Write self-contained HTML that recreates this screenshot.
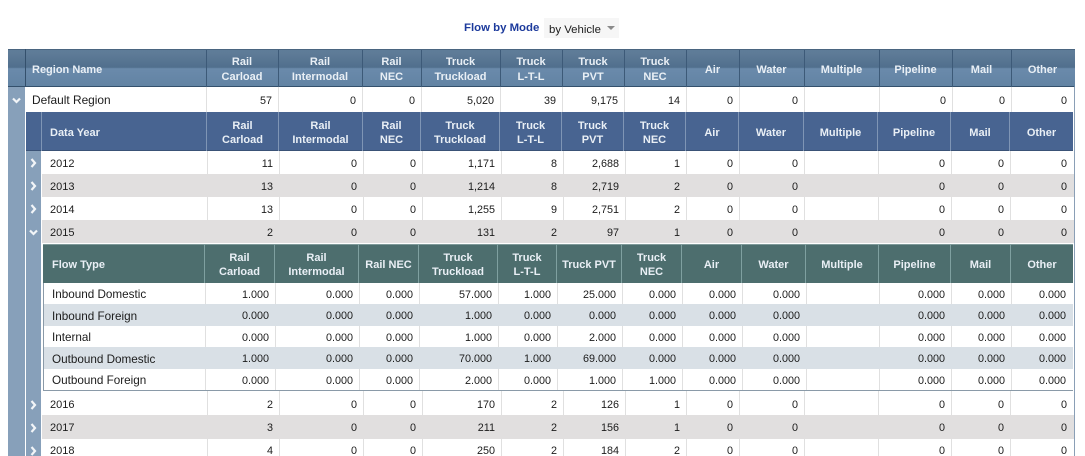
<!DOCTYPE html>
<html>
<head>
<meta charset="utf-8">
<style>
html,body{margin:0;padding:0;background:#fff;width:1085px;height:456px;overflow:hidden}
body{position:relative;font-family:"Liberation Sans",Arial,sans-serif;color:#1c1c1c}
.a{position:absolute}
table{position:absolute;border-collapse:separate;border-spacing:0;table-layout:fixed}
td,th{padding:0;overflow:hidden;white-space:nowrap;box-sizing:border-box}
td{text-align:right;padding-right:6px;padding-top:2px;font-size:10.8px;border-right:1px solid #e0e0e0}
td:last-child{border-right:0;padding-right:7px}
td.n{text-align:left;font-size:11.9px;padding-right:0}
td.y{font-size:11px}
th{font-size:11px;font-weight:bold;color:#e9eff5;text-align:center;white-space:normal}
th.n{text-align:left}
.h1 th{line-height:15px;border-right:1px solid #3d5a78;height:37px;padding-top:3px;padding-right:1px}
.h1 th:last-child{border-right:0}
.h1 th.n{padding-left:6px}
.h2 th{line-height:14px;border-right:1px solid #7f95b5;height:39px;padding-top:2px}
.h2 th:last-child{border-right:0}
.h2 th.n{padding-left:8px}
.h3 th{line-height:14px;border-right:1px solid #7fa0a0;height:39px;padding-top:2px}
.h3 th:last-child{border-right:0}
.h3 th.n{padding-left:9px}
.r1 td.n{padding-left:7px;padding-top:0}
.r2 td.n{padding-left:8px}
.r3 td.n{padding-left:9px;font-size:11.7px}
.g td{background:#e1dfdf;border-right-color:#e1dfdf}
.b td{background:#d9e0e6;border-right-color:#d9e0e6}
.t3 td{padding-top:3px}
.t1 td{padding-top:1px}
.t0 td{padding-top:0}
svg{position:absolute;display:block}
</style>
</head>
<body>
<div class="a" style="left:464px;top:20px;font-size:11.4px;font-weight:bold;color:#1c3a9c;line-height:16px">Flow by Mode</div>
<div class="a" style="left:544px;top:18px;width:75px;height:20px;background:#f6f6f6"></div>
<div class="a" style="left:549px;top:23px;font-size:11.4px;line-height:15px;color:#1c1c1c">by Vehicle</div>
<div class="a" style="left:607px;top:26px;width:0;height:0;border-left:4px solid transparent;border-right:4px solid transparent;border-top:4px solid #8a8a8a"></div>

<!-- outer strip -->
<div class="a" style="left:8px;top:87px;width:17px;height:369px;background:#87a0ba"></div>
<div class="a" style="left:26px;top:151px;width:15px;height:305px;background:#87a0ba"></div>
<div class="a" style="left:1074px;top:87px;width:1px;height:369px;background:#8a9fb6"></div>

<!-- L1 header -->
<div class="a" style="left:8px;top:49px;width:1067px;height:38px;background:linear-gradient(#5f7d99 0,#5e7b97 12%,#577592 30%,#506f8d 48%,#6a8aab 52%,#6283a3 100%)"></div>
<div class="a" style="left:8px;top:49px;width:1067px;height:1px;background:#4a6580"></div>
<div class="a" style="left:8px;top:86px;width:1066px;height:1px;background:#34506c"></div>
<div class="a" style="left:25px;top:49px;width:1px;height:38px;background:#34506c"></div>
<table class="h1" style="left:26px;top:50px;width:1048px">
<colgroup><col style="width:181px"><col style="width:72px"><col style="width:84px"><col style="width:59px"><col style="width:79px"><col style="width:62px"><col style="width:62px"><col style="width:62px"><col style="width:53px"><col style="width:65px"><col style="width:75px"><col style="width:73px"><col style="width:59px"><col style="width:62px"></colgroup>
<tr><th class="n">Region Name</th><th>Rail<br>Carload</th><th>Rail<br>Intermodal</th><th>Rail<br>NEC</th><th>Truck<br>Truckload</th><th>Truck<br>L-T-L</th><th>Truck<br>PVT</th><th>Truck<br>NEC</th><th>Air</th><th>Water</th><th>Multiple</th><th>Pipeline</th><th>Mail</th><th>Other</th></tr>
</table>

<!-- L1 row -->
<table class="r1" style="left:25px;top:87px;width:1049px">
<colgroup><col style="width:182px"><col style="width:72px"><col style="width:84px"><col style="width:59px"><col style="width:79px"><col style="width:62px"><col style="width:62px"><col style="width:62px"><col style="width:53px"><col style="width:65px"><col style="width:75px"><col style="width:73px"><col style="width:59px"><col style="width:62px"></colgroup>
<tr style="height:25px"><td class="n">Default Region</td><td>57</td><td>0</td><td>0</td><td>5,020</td><td>39</td><td>9,175</td><td>14</td><td>0</td><td>0</td><td></td><td>0</td><td>0</td><td>0</td></tr>
</table>

<!-- L2 header -->
<div class="a" style="left:26px;top:112px;width:1047px;height:39px;background:#486491"></div>
<div class="a" style="left:26px;top:150px;width:1047px;height:1px;background:#3a5276"></div>
<div class="a" style="left:41px;top:112px;width:1px;height:39px;background:#7f95b5"></div>
<table class="h2" style="left:42px;top:112px;width:1031px">
<colgroup><col style="width:165px"><col style="width:72px"><col style="width:84px"><col style="width:58px"><col style="width:79px"><col style="width:62px"><col style="width:62px"><col style="width:62px"><col style="width:53px"><col style="width:65px"><col style="width:74px"><col style="width:73px"><col style="width:59px"><col style="width:63px"></colgroup>
<tr><th class="n">Data Year</th><th>Rail<br>Carload</th><th>Rail<br>Intermodal</th><th>Rail<br>NEC</th><th>Truck<br>Truckload</th><th>Truck<br>L-T-L</th><th>Truck<br>PVT</th><th>Truck<br>NEC</th><th>Air</th><th>Water</th><th>Multiple</th><th>Pipeline</th><th>Mail</th><th>Other</th></tr>
</table>

<!-- L2 rows -->
<table class="r2" style="left:42px;top:151px;width:1032px">
<colgroup><col style="width:166px"><col style="width:72px"><col style="width:84px"><col style="width:59px"><col style="width:79px"><col style="width:62px"><col style="width:62px"><col style="width:61px"><col style="width:53px"><col style="width:65px"><col style="width:74px"><col style="width:73px"><col style="width:59px"><col style="width:63px"></colgroup>
<tr style="height:23px"><td class="n y">2012</td><td>11</td><td>0</td><td>0</td><td>1,171</td><td>8</td><td>2,688</td><td>1</td><td>0</td><td>0</td><td></td><td>0</td><td>0</td><td>0</td></tr>
<tr class="g" style="height:23px"><td class="n y">2013</td><td>13</td><td>0</td><td>0</td><td>1,214</td><td>8</td><td>2,719</td><td>2</td><td>0</td><td>0</td><td></td><td>0</td><td>0</td><td>0</td></tr>
<tr style="height:23px"><td class="n y">2014</td><td>13</td><td>0</td><td>0</td><td>1,255</td><td>9</td><td>2,751</td><td>2</td><td>0</td><td>0</td><td></td><td>0</td><td>0</td><td>0</td></tr>
<tr class="g" style="height:23px"><td class="n y">2015</td><td>2</td><td>0</td><td>0</td><td>131</td><td>2</td><td>97</td><td>1</td><td>0</td><td>0</td><td></td><td>0</td><td>0</td><td>0</td></tr>
</table>

<!-- L3 header -->
<div class="a" style="left:43px;top:244px;width:1030px;height:39px;background:#4d6e6e"></div>
<div class="a" style="left:43px;top:244px;width:1030px;height:1px;background:#7f9a9a"></div>
<table class="h3" style="left:43px;top:244px;width:1030px">
<colgroup><col style="width:162px"><col style="width:70px"><col style="width:84px"><col style="width:60px"><col style="width:79px"><col style="width:59px"><col style="width:65px"><col style="width:60px"><col style="width:60px"><col style="width:64px"><col style="width:73px"><col style="width:72px"><col style="width:60px"><col style="width:62px"></colgroup>
<tr><th class="n">Flow Type</th><th>Rail<br>Carload</th><th>Rail<br>Intermodal</th><th>Rail NEC</th><th>Truck<br>Truckload</th><th>Truck<br>L-T-L</th><th>Truck PVT</th><th>Truck<br>NEC</th><th>Air</th><th>Water</th><th>Multiple</th><th>Pipeline</th><th>Mail</th><th>Other</th></tr>
</table>

<!-- L3 rows -->
<div class="a" style="left:43px;top:283px;width:1px;height:107px;background:#8a9aa8;z-index:2"></div>
<div class="a" style="left:43px;top:390px;width:1030px;height:1px;background:#8a9aa8;z-index:2"></div>
<table class="r3" style="left:43px;top:283px;width:1030px">
<colgroup><col style="width:163px"><col style="width:70px"><col style="width:84px"><col style="width:60px"><col style="width:79px"><col style="width:59px"><col style="width:65px"><col style="width:60px"><col style="width:60px"><col style="width:64px"><col style="width:73px"><col style="width:72px"><col style="width:60px"><col style="width:61px"></colgroup>
<tr style="height:21px"><td class="n">Inbound Domestic</td><td>1.000</td><td>0.000</td><td>0.000</td><td>57.000</td><td>1.000</td><td>25.000</td><td>0.000</td><td>0.000</td><td>0.000</td><td></td><td>0.000</td><td>0.000</td><td>0.000</td></tr>
<tr class="b" style="height:22px"><td class="n">Inbound Foreign</td><td>0.000</td><td>0.000</td><td>0.000</td><td>1.000</td><td>0.000</td><td>0.000</td><td>0.000</td><td>0.000</td><td>0.000</td><td></td><td>0.000</td><td>0.000</td><td>0.000</td></tr>
<tr style="height:21px"><td class="n">Internal</td><td>0.000</td><td>0.000</td><td>0.000</td><td>1.000</td><td>0.000</td><td>2.000</td><td>0.000</td><td>0.000</td><td>0.000</td><td></td><td>0.000</td><td>0.000</td><td>0.000</td></tr>
<tr class="b" style="height:22px"><td class="n">Outbound Domestic</td><td>1.000</td><td>0.000</td><td>0.000</td><td>70.000</td><td>1.000</td><td>69.000</td><td>0.000</td><td>0.000</td><td>0.000</td><td></td><td>0.000</td><td>0.000</td><td>0.000</td></tr>
<tr style="height:21px"><td class="n">Outbound Foreign</td><td>0.000</td><td>0.000</td><td>0.000</td><td>2.000</td><td>0.000</td><td>1.000</td><td>1.000</td><td>0.000</td><td>0.000</td><td></td><td>0.000</td><td>0.000</td><td>0.000</td></tr>
</table>

<!-- L2 rows continued -->
<table class="r2" style="left:42px;top:391px;width:1032px">
<colgroup><col style="width:166px"><col style="width:72px"><col style="width:84px"><col style="width:59px"><col style="width:79px"><col style="width:62px"><col style="width:62px"><col style="width:61px"><col style="width:53px"><col style="width:65px"><col style="width:74px"><col style="width:73px"><col style="width:59px"><col style="width:63px"></colgroup>
<tr class="t3" style="height:24px"><td class="n y">2016</td><td>2</td><td>0</td><td>0</td><td>170</td><td>2</td><td>126</td><td>1</td><td>0</td><td>0</td><td></td><td>0</td><td>0</td><td>0</td></tr>
<tr class="g t1" style="height:24px"><td class="n y">2017</td><td>3</td><td>0</td><td>0</td><td>211</td><td>2</td><td>156</td><td>1</td><td>0</td><td>0</td><td></td><td>0</td><td>0</td><td>0</td></tr>
<tr class="t0" style="height:23px"><td class="n y">2018</td><td>4</td><td>0</td><td>0</td><td>250</td><td>2</td><td>184</td><td>2</td><td>0</td><td>0</td><td></td><td>0</td><td>0</td><td>0</td></tr>
</table>

<!-- chevrons -->
<svg style="left:12px;top:97px" width="9" height="7" viewBox="0 0 9 7"><path d="M1 1.5L4.5 5L8 1.5" fill="none" stroke="#f2f5f8" stroke-width="2.2"/></svg>
<svg style="left:30px;top:158px" width="7" height="10" viewBox="0 0 7 10"><path d="M1.5 1L5 5L1.5 9" fill="none" stroke="#f2f5f8" stroke-width="2.2"/></svg>
<svg style="left:30px;top:181px" width="7" height="10" viewBox="0 0 7 10"><path d="M1.5 1L5 5L1.5 9" fill="none" stroke="#f2f5f8" stroke-width="2.2"/></svg>
<svg style="left:30px;top:204px" width="7" height="10" viewBox="0 0 7 10"><path d="M1.5 1L5 5L1.5 9" fill="none" stroke="#f2f5f8" stroke-width="2.2"/></svg>
<svg style="left:29px;top:229px" width="9" height="7" viewBox="0 0 9 7"><path d="M1 1.5L4.5 5L8 1.5" fill="none" stroke="#f2f5f8" stroke-width="2.2"/></svg>
<svg style="left:30px;top:400px" width="7" height="10" viewBox="0 0 7 10"><path d="M1.5 1L5 5L1.5 9" fill="none" stroke="#f2f5f8" stroke-width="2.2"/></svg>
<svg style="left:30px;top:423px" width="7" height="10" viewBox="0 0 7 10"><path d="M1.5 1L5 5L1.5 9" fill="none" stroke="#f2f5f8" stroke-width="2.2"/></svg>
<svg style="left:30px;top:446px" width="7" height="10" viewBox="0 0 7 10"><path d="M1.5 1L5 5L1.5 9" fill="none" stroke="#f2f5f8" stroke-width="2.2"/></svg>
</body>
</html>
